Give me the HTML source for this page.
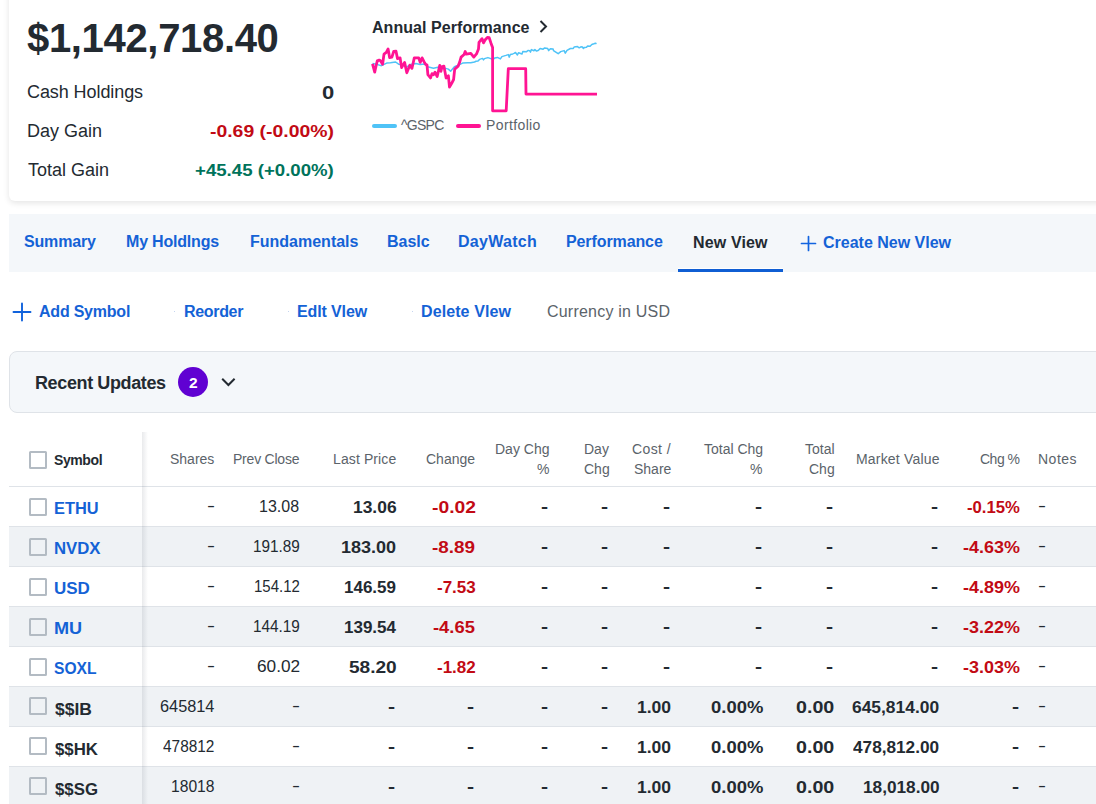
<!DOCTYPE html>
<html><head><meta charset="utf-8"><style>
html,body{margin:0;padding:0;background:#fff;width:1096px;height:804px;overflow:hidden}
body{position:relative;font-family:"Liberation Sans",sans-serif;color:#232a31}
.a{position:absolute;white-space:nowrap;line-height:1}
.card{position:absolute;left:9px;top:-30px;width:1120px;height:231px;background:#fff;border-radius:6px;box-shadow:0 2px 6px rgba(0,0,0,.11)}
.tabs{position:absolute;left:9px;top:214px;width:1100px;height:58px;background:#f4f7fa}
.ru{position:absolute;left:9px;top:351px;width:1100px;height:60px;background:#f4f7fa;border:1px solid #dfe3e8;border-radius:8px}
.hl{position:absolute;left:9px;width:1100px;height:1px;background:#dfe3e8}
.gr{position:absolute;left:9px;width:1100px;height:39px;background:#eff2f5}
.cb{position:absolute;left:29px;width:14px;height:14px;border:2px solid #b3bbc3;border-radius:1.5px}
.dot{position:absolute;width:1px;height:1px;background:#c5d5ef}
</style></head><body>
<div class="card"></div>
<svg style="position:absolute;left:0;top:0" width="620" height="140" viewBox="0 0 620 140">
<polyline fill="none" stroke="#4fc3f7" stroke-width="1.5" stroke-linejoin="round" points="372.5,63.5 377.7,64.6 381.4,65.7 386.7,63.1 390.4,62.7 395.6,62 398.6,64.2 402.3,64.6 406.8,66.8 410.5,64.6 415.8,63.5 420.2,64.6 424.7,63.9 427.5,66.8 433.5,68.3 437.9,67.2 443.9,67.9 448.4,69.1 450.6,71.3 454.4,66.8 458.1,65.3 462.6,63.1 467.8,62.7 470.8,62.7 474.5,62 476,61.3 478,61.1 479.5,59.4 482.5,58.4 483.5,59.9 484.5,58.6 487.9,57.6 490.9,58.6 492.9,59.6 494.9,57.9 497.4,57.4 500.4,58.9 501.9,56.6 505.9,55.4 508.3,54.6 509.3,57.1 510.3,54.4 512.8,53.9 514,53.4 515.5,52.5 517.4,55 518.6,52.7 522,54 522.8,51.5 526.6,51.7 528.2,50.4 529.7,50.8 530.5,52.1 531.4,49.6 533.9,50.8 534.9,49.6 536.6,51.1 538.5,50.2 540.1,48.5 543.1,49.2 544.7,47.9 547.7,48.6 548.7,50.6 550.4,48.8 553.1,49 553.5,50.6 555.8,52.1 558.2,53.7 560.7,51.6 564.1,50.6 565.3,53.1 567,50.4 570.4,48.5 573.3,48.5 574.1,47 577.5,46.6 579.2,47.8 580.9,46.8 582.5,47 583.4,48.5 584.6,47.4 586.5,47.2 587.6,45.9 590.1,46.2 591.8,44.5 593.9,43.8 595.5,43.2 596.6,43.6"/>
<polyline fill="none" stroke="#ff1493" stroke-width="2.8" stroke-linejoin="round" points="372.5,63.9 374.7,72.1 376.2,65.3 377.3,60.9 379.2,60.1 380.3,60.5 382.6,64.2 384,54.1 386.3,52.3 388.1,48.9 389.6,57.5 391.9,57.1 393.7,51.5 396,51.2 397.5,58.6 400.1,57.9 401.6,67.6 404.6,62.4 406.8,72.8 409.8,65.3 412,68.3 414.3,57.9 418.7,57.9 420.2,62.4 422.1,57.9 424,61.6 425.5,64.2 427,65 427.9,74.7 430.5,78 432,73.6 433.5,74.7 435,72.1 437.2,76.5 439.8,65.3 440.9,71.3 442,66.8 443.9,66.1 446.1,78 448.4,75.8 449.5,87 451.7,83.3 453.6,79.5 454.7,69.1 458.1,66.1 459.6,62.4 461.1,57.1 464.1,54.5 465.2,51.5 466.3,54.1 470.8,53.4 473.8,57.1 476.5,53.9 478.5,48.9 479,42.4 482,38.7 483.5,42.9 485,40 487.4,37.5 489.2,37.7 490.9,42.9 492.6,47.5 492.6,110.8 506.2,110.8 508.3,68.7 525.7,68.7 526,94.1 597,94.1"/>
<line x1="374" y1="126" x2="395" y2="126" stroke="#4fc3f7" stroke-width="4" stroke-linecap="round"/>
<line x1="458" y1="126" x2="479" y2="126" stroke="#ff1493" stroke-width="4" stroke-linecap="round"/>
<path d="M540.5 21 L546 26.5 L540.5 32" fill="none" stroke="#232a31" stroke-width="2"/>
</svg>
<div class="tabs"></div>
<div style="position:absolute;left:678px;top:268px;width:105px;height:1px;background:#fff"></div>
<div style="position:absolute;left:678px;top:269px;width:105px;height:3px;background:#0f5ed3"></div>
<svg style="position:absolute;left:800px;top:235px" width="17" height="17" viewBox="0 0 17 17"><path d="M8.5 1.5V15.5M1.5 8.5H15.5" stroke="#1264e0" stroke-width="1.7" stroke-linecap="round"/></svg>
<svg style="position:absolute;left:12px;top:302px" width="20" height="20" viewBox="0 0 20 20"><path d="M10 1.5V18.5M1.5 10H18.5" stroke="#1062dc" stroke-width="1.9" stroke-linecap="round"/></svg>
<div class="dot" style="left:174px;top:311px"></div>
<div class="dot" style="left:288px;top:311px"></div>
<div class="dot" style="left:412px;top:311px"></div>
<div class="ru"></div>
<div style="position:absolute;left:178px;top:367px;width:30px;height:30px;border-radius:50%;background:#6001d2"></div>
<svg style="position:absolute;left:218px;top:374px" width="20" height="16" viewBox="0 0 20 16"><path d="M4.2 4.8 L10.4 11 L16.6 4.8" fill="none" stroke="#232a31" stroke-width="2"/></svg>
<div class="cb" style="top:451px"></div>
<div class="hl" style="top:486px"></div>
<div class="hl" style="top:526px"></div>
<div class="cb" style="top:498px"></div>
<div class="gr" style="top:527px"></div>
<div class="hl" style="top:566px"></div>
<div class="cb" style="top:538px"></div>
<div class="hl" style="top:606px"></div>
<div class="cb" style="top:578px"></div>
<div class="gr" style="top:607px"></div>
<div class="hl" style="top:646px"></div>
<div class="cb" style="top:618px"></div>
<div class="hl" style="top:686px"></div>
<div class="cb" style="top:658px"></div>
<div class="gr" style="top:687px"></div>
<div class="hl" style="top:726px"></div>
<div class="cb" style="top:697px"></div>
<div class="hl" style="top:766px"></div>
<div class="cb" style="top:737px"></div>
<div class="gr" style="top:767px"></div>
<div class="hl" style="top:806px"></div>
<div class="cb" style="top:777px"></div>
<div style="position:absolute;left:142px;top:432px;width:6px;height:400px;background:linear-gradient(to right,rgba(40,50,70,.10),rgba(40,50,70,0))"></div>
<div class="a" style="left:27px;top:18px;font-size:40px;color:#232a31;font-weight:700;letter-spacing:-0.33px">$1,142,718.40</div>
<div class="a" style="left:27px;top:83px;font-size:18px;color:#232a31;letter-spacing:-0.08px">Cash Holdings</div>
<div class="a" style="left:27px;top:122px;font-size:18px;color:#232a31">Day Gain</div>
<div class="a" style="left:28px;top:161px;font-size:18px;color:#232a31">Total Gain</div>
<div class="a" style="left:322px;top:84px;font-size:18px;color:#232a31;font-weight:700;transform:scaleX(1.2222);transform-origin:0 0">0</div>
<div class="a" style="left:210px;top:123px;font-size:17px;color:#c20a14;font-weight:700;transform:scaleX(1.1402);transform-origin:0 0">-0.69 (-0.00%)</div>
<div class="a" style="left:195px;top:162px;font-size:17px;color:#00735b;font-weight:700;transform:scaleX(1.096);transform-origin:0 0">+45.45 (+0.00%)</div>
<div class="a" style="left:372px;top:20px;font-size:16px;color:#232a31;font-weight:700;letter-spacing:0.06px">Annual Performance</div>
<div class="a" style="left:401px;top:118px;font-size:14px;color:#5b636a;letter-spacing:-0.75px">^GSPC</div>
<div class="a" style="left:486px;top:118px;font-size:14px;color:#5b636a;letter-spacing:0.38px">Portfolio</div>
<div class="a" style="left:24px;top:234px;font-size:16px;color:#1462d6;font-weight:700;letter-spacing:-0.17px">Summary</div>
<div class="a" style="left:126px;top:234px;font-size:16px;color:#1462d6;font-weight:700;letter-spacing:-0.2px">My Holdlngs</div>
<div class="a" style="left:250px;top:234px;font-size:16px;color:#1462d6;font-weight:700">Fundamentals</div>
<div class="a" style="left:387px;top:234px;font-size:16px;color:#1462d6;font-weight:700">Baslc</div>
<div class="a" style="left:458px;top:234px;font-size:16px;color:#1462d6;font-weight:700;letter-spacing:0.29px">DayWatch</div>
<div class="a" style="left:566px;top:234px;font-size:16px;color:#1462d6;font-weight:700;letter-spacing:-0.1px">Performance</div>
<div class="a" style="left:693px;top:235px;font-size:16px;color:#232a31;font-weight:700;letter-spacing:0.14px">New View</div>
<div class="a" style="left:823px;top:235px;font-size:16px;color:#1462d6;font-weight:700">Create New Vlew</div>
<div class="a" style="left:39px;top:304px;font-size:16px;color:#1462d6;font-weight:700;letter-spacing:-0.22px">Add Symbol</div>
<div class="a" style="left:184px;top:304px;font-size:16px;color:#1462d6;font-weight:700;letter-spacing:-0.33px">Reorder</div>
<div class="a" style="left:297px;top:304px;font-size:16px;color:#1462d6;font-weight:700;letter-spacing:-0.12px">Edlt Vlew</div>
<div class="a" style="left:421px;top:304px;font-size:16px;color:#1462d6;font-weight:700;letter-spacing:0.1px">Delete Vlew</div>
<div class="a" style="left:547px;top:304px;font-size:16px;color:#5b636a;letter-spacing:0.21px">Currency in USD</div>
<div class="a" style="left:35px;top:374px;font-size:18px;color:#232a31;font-weight:700;letter-spacing:-0.38px">Recent Updates</div>
<div class="a" style="left:189px;top:375px;font-size:15.5px;color:#fff;font-weight:700">2</div>
<div class="a" style="left:54px;top:453px;font-size:14px;color:#232a31;font-weight:700;letter-spacing:-0.4px">Symbol</div>
<div class="a" style="left:170px;top:452px;font-size:14px;color:#5b636a">Shares</div>
<div class="a" style="left:233px;top:452px;font-size:14px;color:#5b636a;letter-spacing:-0.22px">Prev Close</div>
<div class="a" style="left:333px;top:452px;font-size:14px;color:#5b636a;letter-spacing:0.11px">Last Price</div>
<div class="a" style="left:426px;top:452px;font-size:14px;color:#5b636a">Change</div>
<div class="a" style="left:856px;top:452px;font-size:14px;color:#5b636a;letter-spacing:0.18px">Market Value</div>
<div class="a" style="left:980px;top:452px;font-size:14px;color:#5b636a;letter-spacing:-0.5px">Chg %</div>
<div class="a" style="left:1038px;top:452px;font-size:14px;color:#5b636a;letter-spacing:0.5px">Notes</div>
<div class="a" style="left:495px;top:442px;font-size:14px;color:#5b636a">Day Chg</div>
<div class="a" style="left:537px;top:462px;font-size:14px;color:#5b636a">%</div>
<div class="a" style="left:584px;top:442px;font-size:14px;color:#5b636a">Day</div>
<div class="a" style="left:584px;top:462px;font-size:14px;color:#5b636a">Chg</div>
<div class="a" style="left:632px;top:442px;font-size:14px;color:#5b636a;letter-spacing:0.4px">Cost /</div>
<div class="a" style="left:634px;top:462px;font-size:14px;color:#5b636a">Share</div>
<div class="a" style="left:704px;top:442px;font-size:14px;color:#5b636a">Total Chg</div>
<div class="a" style="left:750px;top:462px;font-size:14px;color:#5b636a">%</div>
<div class="a" style="left:805px;top:442px;font-size:14px;color:#5b636a">Total</div>
<div class="a" style="left:809px;top:462px;font-size:14px;color:#5b636a">Chg</div>
<div class="a" style="left:54px;top:501px;font-size:16px;color:#1462d6;font-weight:700;transform:scaleX(1.0238);transform-origin:0 0">ETHU</div>
<div class="a" style="left:207px;top:498px;font-size:16px;color:#232a31;transform:scaleX(1.5);transform-origin:0 0">-</div>
<div class="a" style="left:259px;top:499px;font-size:16px;color:#232a31">13.08</div>
<div class="a" style="left:353px;top:499px;font-size:17px;color:#232a31;font-weight:700;transform:scaleX(1.0244);transform-origin:0 0">13.06</div>
<div class="a" style="left:432px;top:499px;font-size:17px;color:#c20a14;font-weight:700;transform:scaleX(1.1351);transform-origin:0 0">-0.02</div>
<div class="a" style="left:541px;top:498px;font-size:17px;color:#232a31;font-weight:700;transform:scaleX(1.25);transform-origin:0 0">-</div>
<div class="a" style="left:601px;top:498px;font-size:17px;color:#232a31;font-weight:700;transform:scaleX(1.25);transform-origin:0 0">-</div>
<div class="a" style="left:663px;top:498px;font-size:17px;color:#232a31;font-weight:700;transform:scaleX(1.25);transform-origin:0 0">-</div>
<div class="a" style="left:755px;top:498px;font-size:17px;color:#232a31;font-weight:700;transform:scaleX(1.25);transform-origin:0 0">-</div>
<div class="a" style="left:826px;top:498px;font-size:17px;color:#232a31;font-weight:700;transform:scaleX(1.25);transform-origin:0 0">-</div>
<div class="a" style="left:931px;top:498px;font-size:17px;color:#232a31;font-weight:700;transform:scaleX(1.25);transform-origin:0 0">-</div>
<div class="a" style="left:967px;top:499px;font-size:17px;color:#c20a14;font-weight:700;transform:scaleX(0.9811);transform-origin:0 0">-0.15%</div>
<div class="a" style="left:1038px;top:498px;font-size:16px;color:#232a31;transform:scaleX(1.5);transform-origin:0 0">-</div>
<div class="a" style="left:54px;top:541px;font-size:16px;color:#1462d6;font-weight:700;transform:scaleX(1.0465);transform-origin:0 0">NVDX</div>
<div class="a" style="left:207px;top:538px;font-size:16px;color:#232a31;transform:scaleX(1.5);transform-origin:0 0">-</div>
<div class="a" style="left:253px;top:539px;font-size:16px;color:#232a31;transform:scaleX(0.9574);transform-origin:0 0">191.89</div>
<div class="a" style="left:341px;top:539px;font-size:17px;color:#232a31;font-weight:700;transform:scaleX(1.06);transform-origin:0 0">183.00</div>
<div class="a" style="left:432px;top:539px;font-size:17px;color:#c20a14;font-weight:700;transform:scaleX(1.1081);transform-origin:0 0">-8.89</div>
<div class="a" style="left:541px;top:538px;font-size:17px;color:#232a31;font-weight:700;transform:scaleX(1.25);transform-origin:0 0">-</div>
<div class="a" style="left:601px;top:538px;font-size:17px;color:#232a31;font-weight:700;transform:scaleX(1.25);transform-origin:0 0">-</div>
<div class="a" style="left:663px;top:538px;font-size:17px;color:#232a31;font-weight:700;transform:scaleX(1.25);transform-origin:0 0">-</div>
<div class="a" style="left:755px;top:538px;font-size:17px;color:#232a31;font-weight:700;transform:scaleX(1.25);transform-origin:0 0">-</div>
<div class="a" style="left:826px;top:538px;font-size:17px;color:#232a31;font-weight:700;transform:scaleX(1.25);transform-origin:0 0">-</div>
<div class="a" style="left:931px;top:538px;font-size:17px;color:#232a31;font-weight:700;transform:scaleX(1.25);transform-origin:0 0">-</div>
<div class="a" style="left:963px;top:539px;font-size:17px;color:#c20a14;font-weight:700;transform:scaleX(1.0566);transform-origin:0 0">-4.63%</div>
<div class="a" style="left:1038px;top:538px;font-size:16px;color:#232a31;transform:scaleX(1.5);transform-origin:0 0">-</div>
<div class="a" style="left:54px;top:581px;font-size:16px;color:#1462d6;font-weight:700;transform:scaleX(1.0625);transform-origin:0 0">USD</div>
<div class="a" style="left:207px;top:578px;font-size:16px;color:#232a31;transform:scaleX(1.5);transform-origin:0 0">-</div>
<div class="a" style="left:254px;top:579px;font-size:16px;color:#232a31;transform:scaleX(0.9362);transform-origin:0 0">154.12</div>
<div class="a" style="left:344px;top:579px;font-size:17px;color:#232a31;font-weight:700">146.59</div>
<div class="a" style="left:437px;top:579px;font-size:17px;color:#c20a14;font-weight:700">-7.53</div>
<div class="a" style="left:541px;top:578px;font-size:17px;color:#232a31;font-weight:700;transform:scaleX(1.25);transform-origin:0 0">-</div>
<div class="a" style="left:601px;top:578px;font-size:17px;color:#232a31;font-weight:700;transform:scaleX(1.25);transform-origin:0 0">-</div>
<div class="a" style="left:663px;top:578px;font-size:17px;color:#232a31;font-weight:700;transform:scaleX(1.25);transform-origin:0 0">-</div>
<div class="a" style="left:755px;top:578px;font-size:17px;color:#232a31;font-weight:700;transform:scaleX(1.25);transform-origin:0 0">-</div>
<div class="a" style="left:826px;top:578px;font-size:17px;color:#232a31;font-weight:700;transform:scaleX(1.25);transform-origin:0 0">-</div>
<div class="a" style="left:931px;top:578px;font-size:17px;color:#232a31;font-weight:700;transform:scaleX(1.25);transform-origin:0 0">-</div>
<div class="a" style="left:963px;top:579px;font-size:17px;color:#c20a14;font-weight:700;transform:scaleX(1.0566);transform-origin:0 0">-4.89%</div>
<div class="a" style="left:1038px;top:578px;font-size:16px;color:#232a31;transform:scaleX(1.5);transform-origin:0 0">-</div>
<div class="a" style="left:54px;top:621px;font-size:16px;color:#1462d6;font-weight:700;transform:scaleX(1.1304);transform-origin:0 0">MU</div>
<div class="a" style="left:207px;top:618px;font-size:16px;color:#232a31;transform:scaleX(1.5);transform-origin:0 0">-</div>
<div class="a" style="left:253px;top:619px;font-size:16px;color:#232a31;transform:scaleX(0.9574);transform-origin:0 0">144.19</div>
<div class="a" style="left:344px;top:619px;font-size:17px;color:#232a31;font-weight:700">139.54</div>
<div class="a" style="left:433px;top:619px;font-size:17px;color:#c20a14;font-weight:700;transform:scaleX(1.0811);transform-origin:0 0">-4.65</div>
<div class="a" style="left:541px;top:618px;font-size:17px;color:#232a31;font-weight:700;transform:scaleX(1.25);transform-origin:0 0">-</div>
<div class="a" style="left:601px;top:618px;font-size:17px;color:#232a31;font-weight:700;transform:scaleX(1.25);transform-origin:0 0">-</div>
<div class="a" style="left:663px;top:618px;font-size:17px;color:#232a31;font-weight:700;transform:scaleX(1.25);transform-origin:0 0">-</div>
<div class="a" style="left:755px;top:618px;font-size:17px;color:#232a31;font-weight:700;transform:scaleX(1.25);transform-origin:0 0">-</div>
<div class="a" style="left:826px;top:618px;font-size:17px;color:#232a31;font-weight:700;transform:scaleX(1.25);transform-origin:0 0">-</div>
<div class="a" style="left:931px;top:618px;font-size:17px;color:#232a31;font-weight:700;transform:scaleX(1.25);transform-origin:0 0">-</div>
<div class="a" style="left:963px;top:619px;font-size:17px;color:#c20a14;font-weight:700;transform:scaleX(1.0566);transform-origin:0 0">-3.22%</div>
<div class="a" style="left:1038px;top:618px;font-size:16px;color:#232a31;transform:scaleX(1.5);transform-origin:0 0">-</div>
<div class="a" style="left:54px;top:661px;font-size:16px;color:#1462d6;font-weight:700;transform:scaleX(0.9762);transform-origin:0 0">SOXL</div>
<div class="a" style="left:207px;top:658px;font-size:16px;color:#232a31;transform:scaleX(1.5);transform-origin:0 0">-</div>
<div class="a" style="left:257px;top:659px;font-size:16px;color:#232a31;transform:scaleX(1.0769);transform-origin:0 0">60.02</div>
<div class="a" style="left:349px;top:659px;font-size:17px;color:#232a31;font-weight:700;transform:scaleX(1.122);transform-origin:0 0">58.20</div>
<div class="a" style="left:437px;top:659px;font-size:17px;color:#c20a14;font-weight:700">-1.82</div>
<div class="a" style="left:541px;top:658px;font-size:17px;color:#232a31;font-weight:700;transform:scaleX(1.25);transform-origin:0 0">-</div>
<div class="a" style="left:601px;top:658px;font-size:17px;color:#232a31;font-weight:700;transform:scaleX(1.25);transform-origin:0 0">-</div>
<div class="a" style="left:663px;top:658px;font-size:17px;color:#232a31;font-weight:700;transform:scaleX(1.25);transform-origin:0 0">-</div>
<div class="a" style="left:755px;top:658px;font-size:17px;color:#232a31;font-weight:700;transform:scaleX(1.25);transform-origin:0 0">-</div>
<div class="a" style="left:826px;top:658px;font-size:17px;color:#232a31;font-weight:700;transform:scaleX(1.25);transform-origin:0 0">-</div>
<div class="a" style="left:931px;top:658px;font-size:17px;color:#232a31;font-weight:700;transform:scaleX(1.25);transform-origin:0 0">-</div>
<div class="a" style="left:963px;top:659px;font-size:17px;color:#c20a14;font-weight:700;transform:scaleX(1.0566);transform-origin:0 0">-3.03%</div>
<div class="a" style="left:1038px;top:658px;font-size:16px;color:#232a31;transform:scaleX(1.5);transform-origin:0 0">-</div>
<div class="a" style="left:55px;top:702px;font-size:16px;color:#232a31;font-weight:700;transform:scaleX(1.0909);transform-origin:0 0">$$IB</div>
<div class="a" style="left:160px;top:699px;font-size:16px;color:#232a31;transform:scaleX(1.0192);transform-origin:0 0">645814</div>
<div class="a" style="left:292px;top:698px;font-size:16px;color:#232a31;transform:scaleX(1.5);transform-origin:0 0">-</div>
<div class="a" style="left:388px;top:698px;font-size:17px;color:#232a31;font-weight:700;transform:scaleX(1.25);transform-origin:0 0">-</div>
<div class="a" style="left:467px;top:698px;font-size:17px;color:#232a31;font-weight:700;transform:scaleX(1.25);transform-origin:0 0">-</div>
<div class="a" style="left:541px;top:698px;font-size:17px;color:#232a31;font-weight:700;transform:scaleX(1.25);transform-origin:0 0">-</div>
<div class="a" style="left:601px;top:698px;font-size:17px;color:#232a31;font-weight:700;transform:scaleX(1.25);transform-origin:0 0">-</div>
<div class="a" style="left:637px;top:699px;font-size:17px;color:#232a31;font-weight:700;transform:scaleX(1.0312);transform-origin:0 0">1.00</div>
<div class="a" style="left:711px;top:699px;font-size:17px;color:#232a31;font-weight:700;transform:scaleX(1.0851);transform-origin:0 0">0.00%</div>
<div class="a" style="left:796px;top:699px;font-size:17px;color:#232a31;font-weight:700;transform:scaleX(1.1562);transform-origin:0 0">0.00</div>
<div class="a" style="left:852px;top:699px;font-size:17px;color:#232a31;font-weight:700;transform:scaleX(1.0235);transform-origin:0 0">645,814.00</div>
<div class="a" style="left:1012px;top:698px;font-size:17px;color:#232a31;font-weight:700;transform:scaleX(1.25);transform-origin:0 0">-</div>
<div class="a" style="left:1038px;top:698px;font-size:16px;color:#232a31;transform:scaleX(1.5);transform-origin:0 0">-</div>
<div class="a" style="left:55px;top:742px;font-size:16px;color:#232a31;font-weight:700;transform:scaleX(1.0488);transform-origin:0 0">$$HK</div>
<div class="a" style="left:163px;top:739px;font-size:16px;color:#232a31;transform:scaleX(0.9623);transform-origin:0 0">478812</div>
<div class="a" style="left:292px;top:738px;font-size:16px;color:#232a31;transform:scaleX(1.5);transform-origin:0 0">-</div>
<div class="a" style="left:388px;top:738px;font-size:17px;color:#232a31;font-weight:700;transform:scaleX(1.25);transform-origin:0 0">-</div>
<div class="a" style="left:467px;top:738px;font-size:17px;color:#232a31;font-weight:700;transform:scaleX(1.25);transform-origin:0 0">-</div>
<div class="a" style="left:541px;top:738px;font-size:17px;color:#232a31;font-weight:700;transform:scaleX(1.25);transform-origin:0 0">-</div>
<div class="a" style="left:601px;top:738px;font-size:17px;color:#232a31;font-weight:700;transform:scaleX(1.25);transform-origin:0 0">-</div>
<div class="a" style="left:637px;top:739px;font-size:17px;color:#232a31;font-weight:700;transform:scaleX(1.0312);transform-origin:0 0">1.00</div>
<div class="a" style="left:711px;top:739px;font-size:17px;color:#232a31;font-weight:700;transform:scaleX(1.0851);transform-origin:0 0">0.00%</div>
<div class="a" style="left:796px;top:739px;font-size:17px;color:#232a31;font-weight:700;transform:scaleX(1.1562);transform-origin:0 0">0.00</div>
<div class="a" style="left:853px;top:739px;font-size:17px;color:#232a31;font-weight:700;transform:scaleX(1.0118);transform-origin:0 0">478,812.00</div>
<div class="a" style="left:1012px;top:738px;font-size:17px;color:#232a31;font-weight:700;transform:scaleX(1.25);transform-origin:0 0">-</div>
<div class="a" style="left:1038px;top:738px;font-size:16px;color:#232a31;transform:scaleX(1.5);transform-origin:0 0">-</div>
<div class="a" style="left:55px;top:782px;font-size:16px;color:#232a31;font-weight:700;transform:scaleX(1.05);transform-origin:0 0">$$SG</div>
<div class="a" style="left:171px;top:779px;font-size:16px;color:#232a31;transform:scaleX(0.9767);transform-origin:0 0">18018</div>
<div class="a" style="left:292px;top:778px;font-size:16px;color:#232a31;transform:scaleX(1.5);transform-origin:0 0">-</div>
<div class="a" style="left:388px;top:778px;font-size:17px;color:#232a31;font-weight:700;transform:scaleX(1.25);transform-origin:0 0">-</div>
<div class="a" style="left:467px;top:778px;font-size:17px;color:#232a31;font-weight:700;transform:scaleX(1.25);transform-origin:0 0">-</div>
<div class="a" style="left:541px;top:778px;font-size:17px;color:#232a31;font-weight:700;transform:scaleX(1.25);transform-origin:0 0">-</div>
<div class="a" style="left:601px;top:778px;font-size:17px;color:#232a31;font-weight:700;transform:scaleX(1.25);transform-origin:0 0">-</div>
<div class="a" style="left:637px;top:779px;font-size:17px;color:#232a31;font-weight:700;transform:scaleX(1.0312);transform-origin:0 0">1.00</div>
<div class="a" style="left:711px;top:779px;font-size:17px;color:#232a31;font-weight:700;transform:scaleX(1.0851);transform-origin:0 0">0.00%</div>
<div class="a" style="left:796px;top:779px;font-size:17px;color:#232a31;font-weight:700;transform:scaleX(1.1562);transform-origin:0 0">0.00</div>
<div class="a" style="left:863px;top:779px;font-size:17px;color:#232a31;font-weight:700;transform:scaleX(1.0135);transform-origin:0 0">18,018.00</div>
<div class="a" style="left:1012px;top:778px;font-size:17px;color:#232a31;font-weight:700;transform:scaleX(1.25);transform-origin:0 0">-</div>
<div class="a" style="left:1038px;top:778px;font-size:16px;color:#232a31;transform:scaleX(1.5);transform-origin:0 0">-</div>
</body></html>
